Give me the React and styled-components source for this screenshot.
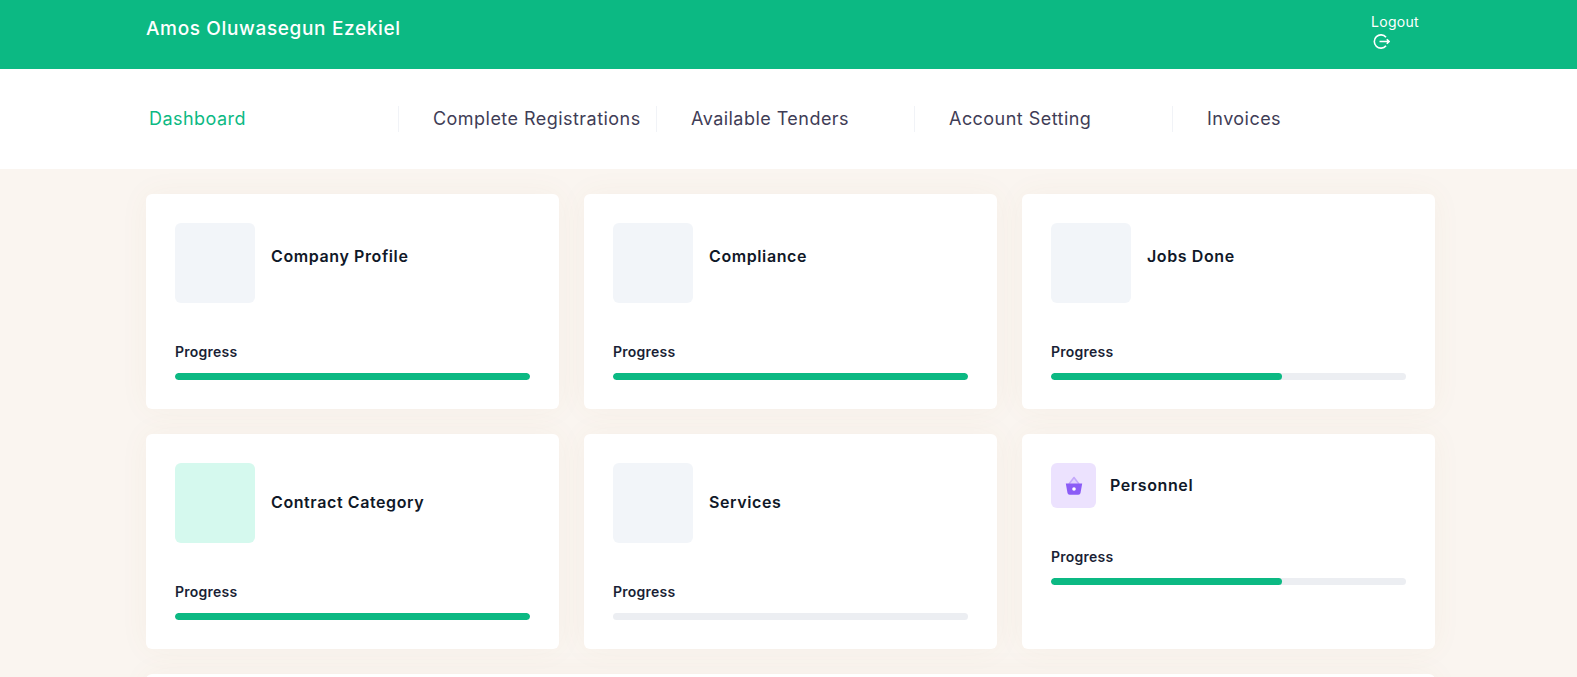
import styled, { createGlobalStyle } from 'styled-components';

const cards = [
  { title: 'Company Profile', progress: 100, tone: '#f2f5f9', titleTop: 21 },
  { title: 'Compliance', progress: 100, tone: '#f2f5f9', titleTop: 21 },
  { title: 'Jobs Done', progress: 65, tone: '#f2f5f9', titleTop: 21 },
  { title: 'Contract Category', progress: 100, tone: '#d5f9ee', titleTop: 27 },
  { title: 'Services', progress: 0, tone: '#f2f5f9', titleTop: 27 },
  { title: 'Personnel', progress: 65, tone: '#ece2fe', titleTop: -2, small: true },
];

const navItems = ['Dashboard', 'Complete Registrations', 'Available Tenders', 'Account Setting', 'Invoices'];

const BasketIcon = () => (
  <svg width="18" height="20" viewBox="0 0 18 20">
    <path d="M4 8 9 1.500 14 8" fill="#e0d2fd" stroke="#c4a9fb" strokeWidth="1.600" strokeLinejoin="round" />
    <path d="M.8 7.500h16.400l-1.700 9.500a2.200 2.200 0 0 1-2.200 1.800H4.700a2.200 2.200 0 0 1-2.200-1.800Z" fill="#8b5cf6" />
    <circle cx="9" cy="13" r="1.800" fill="#fff" />
  </svg>
);

const LogoutIcon = () => (
  <svg width="17" height="15" viewBox="0 0 17 15" fill="none" stroke="#fff" strokeWidth="1.600">
    <path d="M13 3.300A6.600 6.600 0 1 0 13 11.700" />
    <path d="M6.500 7.500H16M13.800 5.300 16 7.500l-2.200 2.200" />
  </svg>
);

const App = () => (
  <>
    <GlobalStyle />
    <Header>
      <UserName>Amos Oluwasegun Ezekiel</UserName>
      <LogoutBox>
        <span>Logout</span>
        <LogoutIcon />
      </LogoutBox>
    </Header>
    <Nav>
      {navItems.map((item, i) => (
        <NavItem key={item} $active={i === 0} $first={i === 0}>
          {item}
        </NavItem>
      ))}
    </Nav>
    <Main>
      <CardGrid>
        {cards.map((card) => (
          <Card key={card.title}>
            <CardHead $small={card.small}>
              <IconTile $small={card.small} $tone={card.tone}>
                {card.small && <BasketIcon />}
              </IconTile>
              <CardTitle $top={card.titleTop}>{card.title}</CardTitle>
            </CardHead>
            <ProgressLabel>Progress</ProgressLabel>
            <Track>
              <Fill style={{ width: `${card.progress}%` }} />
            </Track>
          </Card>
        ))}
        <WideCard />
      </CardGrid>
    </Main>
  </>
);

export default App;

const GlobalStyle = createGlobalStyle`
  html, body {
    margin: 0;
    height: 677px;
    overflow: hidden;
    background: #faf5f0;
    font-family: "Inter", "Noto Sans", sans-serif;
  }
  * {
    box-sizing: border-box;
  }
`;

const Header = styled.header`
  height: 69px;
  background: #0cb983;
  color: #fff;
  display: flex;
  justify-content: space-between;
  padding: 0 146px;
`;

const UserName = styled.div`
  font-size: 19px;
  font-weight: 500;
  letter-spacing: 0.65px;
  line-height: 58px;
`;

const LogoutBox = styled.div`
  margin-right: 10px;
  padding-top: 13px;
  font-size: 14px;
  letter-spacing: 0.3px;
  line-height: 17px;
  width: 50px;
  display: flex;
  flex-direction: column;
  align-items: flex-start;

  svg {
    margin: 4px 0 0 2px;
  }
`;

const Nav = styled.nav`
  height: 100px;
  background: #fff;
  display: flex;
  align-items: center;
  padding-left: 149px;
`;

const NavItem = styled.div`
  width: ${(p) => (p.$first ? '250px' : '258px')};
  height: 26px;
  line-height: 26px;
  font-size: 18px;
  letter-spacing: 0.46px;
  white-space: nowrap;
  padding-left: ${(p) => (p.$first ? '0' : '34px')};
  color: ${(p) => (p.$active ? '#0cb983' : '#3f3d56')};
  border-right: 1px solid #f1f3f7;

  &:last-child {
    border-right: 0;
  }
`;

const Main = styled.main`
  padding: 25px 146px 0;
`;

const CardGrid = styled.div`
  width: 1289px;
  display: grid;
  grid-template-columns: repeat(3, 413px);
  grid-auto-rows: 215px;
  gap: 25px;
`;

const Card = styled.section`
  background: #fff;
  border-radius: 6px;
  padding: 29px;
  box-shadow: 0 0 30px rgba(150, 110, 60, 0.05);
`;

const WideCard = styled(Card)`
  grid-column: 1 / -1;
`;

const CardHead = styled.div`
  display: flex;
  align-items: ${(p) => (p.$small ? 'center' : 'flex-start')};
  gap: ${(p) => (p.$small ? '14px' : '16px')};
  margin-bottom: 39px;
`;

const IconTile = styled.div`
  width: ${(p) => (p.$small ? '45px' : '80px')};
  height: ${(p) => (p.$small ? '45px' : '80px')};
  border-radius: 6px;
  background: ${(p) => p.$tone};
  display: flex;
  align-items: center;
  justify-content: center;
`;

const CardTitle = styled.h3`
  margin: ${(p) => p.$top}px 0 0;
  font-size: 16px;
  line-height: 24px;
  font-weight: 600;
  letter-spacing: 0.6px;
  color: #101828;
`;

const ProgressLabel = styled.div`
  font-size: 14px;
  line-height: 20px;
  font-weight: 600;
  letter-spacing: 0.25px;
  color: #1a1f36;
  margin-bottom: 11px;
`;

const Track = styled.div`
  height: 7px;
  border-radius: 4px;
  background: #eceef2;
  overflow: hidden;
`;

const Fill = styled.div`
  height: 100%;
  border-radius: 4px;
  background: #0cb983;
`;
